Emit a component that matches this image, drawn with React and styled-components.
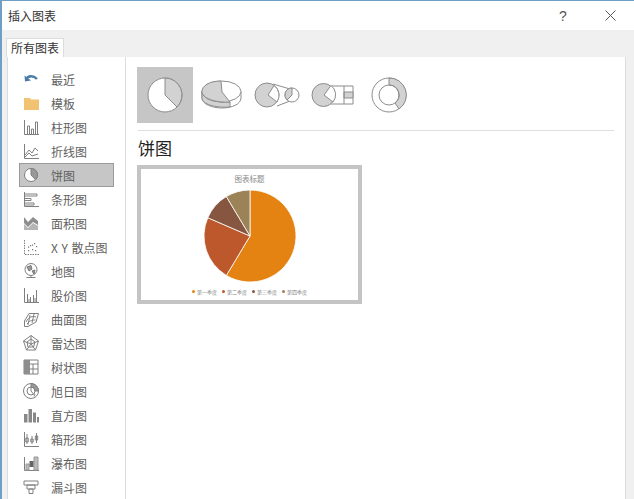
import React from 'react';
import styled, { createGlobalStyle } from 'styled-components';

const GlobalStyle = createGlobalStyle`
    html, body {
        margin: 0;
        padding: 0;
        background: #fff;
    }
    * {
        box-sizing: border-box;
    }
`;

const Window = styled.div`
    width: 634px;
    height: 499px;
    overflow: hidden;
    display: flex;
    flex-direction: column;
    background: #f0f0f0;
    border-top: 1px solid #6f9fc4;
    border-left: 2px solid #6f9fc4;
    font-family: 'Noto Sans CJK SC', 'Liberation Sans', sans-serif;
`;

const TitleBar = styled.div`
    height: 29px;
    flex: none;
    display: flex;
    align-items: center;
    padding: 0 18px 0 6px;
    background: #fff;
`;

const Title = styled.div`
    flex: 1;
    font-size: 12px;
    color: #333;
`;

const HelpButton = styled.div`
    width: 16px;
    margin-right: 34px;
    text-align: center;
    font-family: 'Liberation Sans', sans-serif;
    font-size: 14px;
    color: #555;
`;

const TabStrip = styled.div`
    height: 27px;
    flex: none;
    display: flex;
    align-items: flex-end;
    padding-left: 4px;
`;

const Tab = styled.div`
    width: 58px;
    height: 19px;
    text-align: center;
    background: #fff;
    border: 1px solid #dcdcdc;
    border-bottom: 0;
    font-size: 12px;
    line-height: 18px;
    color: #333;
`;

const Panel = styled.div`
    flex: 1;
    min-height: 0;
    display: flex;
    margin: 0 8px 0 5px;
    background: #fff;
    border-left: 1px solid #dcdcdc;
    border-right: 1px solid #dcdcdc;
`;

const Sidebar = styled.div`
    width: 118px;
    flex: none;
    padding: 10px 11px 0 11px;
    border-right: 1px solid #dcdcdc;
`;

const NavRow = styled.div`
    height: 24px;
    display: flex;
    align-items: center;
    gap: 11px;
    padding-left: 2px;
    font-size: 12px;
    color: #5f5f5f;
    background: ${props => (props.$active ? '#c6c6c6' : 'transparent')};
    border: 1px solid ${props => (props.$active ? '#9a9a9a' : 'transparent')};
`;

const NavIcon = styled.svg`
    width: 18px;
    height: 18px;
    flex: none;
    fill: none;
    stroke: #808080;
    stroke-width: 1;
`;

const NavText = styled.span`
    white-space: nowrap;
    word-spacing: 1px;
`;

const Content = styled.div`
    flex: 1;
    padding: 10px 11px 0 11px;
`;

const TypeRow = styled.div`
    display: flex;
    height: 56px;
`;

const TypeButton = styled.div`
    width: 56px;
    height: 56px;
    flex: none;
    display: flex;
    align-items: center;
    justify-content: center;
    background: ${props => (props.$active ? '#c6c6c6' : 'transparent')};
`;

const TypeIcon = styled.svg`
    width: 48px;
    height: 48px;
    fill: none;
    stroke: #8c8c8c;
    stroke-width: 1;
`;

const Divider = styled.div`
    height: 1px;
    margin: 7px 0 0 1px;
    background: #dedede;
`;

const Heading = styled.div`
    margin: 4px 0 4px 1px;
    font-size: 17px;
    line-height: 26px;
    color: #222;
`;

const Preview = styled.div`
    width: 225px;
    height: 139px;
    display: flex;
    flex-direction: column;
    align-items: center;
    padding-top: 4px;
    background: #fff;
    border: 4px solid #c4c4c4;
`;

const ChartTitle = styled.div`
    font-size: 7.5px;
    line-height: 11px;
    color: #8a8a8a;
`;

const Pie = styled.svg`
    width: 96px;
    height: 96px;
    margin-top: 4px;
    flex: none;
`;

const Legend = styled.div`
    display: flex;
    gap: 5px;
    margin-top: 4px;
`;

const LegendItem = styled.div`
    display: flex;
    align-items: center;
    gap: 2px;
    font-size: 5px;
    line-height: 7px;
    color: #888;
`;

const LegendDot = styled.i`
    width: 3px;
    height: 3px;
    border-radius: 50%;
    background: ${props => props.$color};
`;

const grey = '#d2d2d2';

const navItems = [
    {
        label: '最近',
        icon: (
            <>
                <path d="M4 9.5 C6 5.5 11 5 15 9" stroke="#4a7dab" strokeWidth="2.4" />
                <path d="M2.5 5.5 L3 11.5 L9 10.5 Z" fill="#4a7dab" stroke="none" />
            </>
        ),
    },
    {
        label: '模板',
        icon: <path d="M2 4 H8 L9 5.5 H17 V16 H2 Z" fill="#f0c272" stroke="none" />,
    },
    {
        label: '柱形图',
        icon: <path d="M2.5 2 V16.5 H17 M5.5 16 V8 H7.5 V16 M9.5 16 V11 H11.5 V16 M13.5 16 V4 H15.5 V16" />,
    },
    {
        label: '折线图',
        icon: <path d="M2.5 2 V16.5 H17 M3 13 L7 8 L10 11 L13 6 L16 9 M3 15 L7 11 L10 14 L16 12" />,
    },
    {
        label: '饼图',
        icon: (
            <>
                <circle cx="9" cy="9" r="6.5" fill="#fff" />
                <path d="M9 2.5 A6.5 6.5 0 0 1 13.5 13.7 L9 9 Z" fill="#999" />
            </>
        ),
    },
    {
        label: '条形图',
        icon: <path d="M2.5 2 V16.5 H17 M3 4 H15 V6 H3 M3 8.5 H9 V10.5 H3 M3 13 H12 V15 H3" />,
    },
    {
        label: '面积图',
        icon: (
            <>
                <path d="M2 3 L6 8 L11 3 L16 7 V11 L11 8 L6 13 L2 9 Z" fill="#8e8e8e" stroke="none" />
                <path d="M2 10 L6 14 L11 9 L16 12 V16 H2 Z" fill="#b5b5b5" stroke="none" />
            </>
        ),
    },
    {
        label: 'X Y 散点图',
        icon: (
            <>
                <path d="M2.5 2 V16.5 H17" strokeDasharray="1.5 1" />
                <path
                    d="M6 12 h1.2 v1.2 h-1.2 Z M8 7 h1.2 v1.2 h-1.2 Z M10 11 h1.2 v1.2 h-1.2 Z M12 5 h1.2 v1.2 h-1.2 Z M14 8 h1.2 v1.2 h-1.2 Z M6 8.5 h1.2 v1.2 h-1.2 Z M13 12 h1.2 v1.2 h-1.2 Z M10 6.5 h1.2 v1.2 h-1.2 Z"
                    fill="#777"
                    stroke="none"
                />
            </>
        ),
    },
    {
        label: '地图',
        icon: (
            <>
                <circle cx="9" cy="7.5" r="6" />
                <path d="M5 5 L9 3.5 L10 7 L7 9 Z M10 9 L13 8 L12 12 Z" fill="#999" stroke="#777" />
                <path d="M4.5 15.5 H13.5 M9 13.5 V15.5" />
            </>
        ),
    },
    {
        label: '股价图',
        icon: <path d="M2.5 2 V16.5 H17 M5.5 8 V16 M8.5 11 V16 M11.5 9 V16 M14.5 4 V16 M7 13 V16 M13 12 V16" />,
    },
    {
        label: '曲面图',
        icon: (
            <>
                <path d="M2.5 11 L7 3.5 H16.5 L14 12 L6 16.5 H2.5 Z" />
                <path d="M4 12 C7 6 11 6 14 7 M5 14 C8 10 11 10 13.5 10 M8 5 L6 15 M12 4 L10 13" />
            </>
        ),
    },
    {
        label: '雷达图',
        icon: <path d="M9 1.5 L16.5 7 L13.5 16 H4.5 L1.5 7 Z M9 1.5 V10 M1.5 7 L9 10 L16.5 7 M4.5 16 L9 10 L13.5 16 M9 5 L13 8 L11.5 13 L6 13 L5 8 Z" />,
    },
    {
        label: '树状图',
        icon: (
            <>
                <path d="M2 2 H16 V16 H2 Z" />
                <path d="M2 2 H8 V16 H2 Z" fill="#8e8e8e" stroke="none" />
                <path d="M8 6 H16 M11 6 V16 M8 11 H16" />
            </>
        ),
    },
    {
        label: '旭日图',
        icon: (
            <>
                <circle cx="9" cy="9" r="7.5" />
                <path d="M9 1.5 A7.5 7.5 0 0 1 16.5 9 H13 A4 4 0 0 0 9 5 Z" fill="#999" />
                <circle cx="9" cy="9" r="4" />
                <path d="M9 9 L11.5 12 M9 9 V5 M12 14.5 L13 12" />
            </>
        ),
    },
    {
        label: '直方图',
        icon: <path d="M2 16.5 V8 H5.5 V16.5 Z M6.5 16.5 V3 H10 V16.5 Z M11 16.5 V6.5 H14 V16.5 Z M15 16.5 V11 H17 V16.5 Z" fill="#888" stroke="none" />,
    },
    {
        label: '箱形图',
        icon: (
            <path d="M2.5 2 V16.5 H17 M5 4 V14 M3.8 8 H6.2 V12 H3.8 Z M10 6 V14 M8.8 9 H11.2 V12 H8.8 Z M14.5 3 V13 M13.3 6 H15.7 V10 H13.3 Z" />
        ),
    },
    {
        label: '瀑布图',
        icon: (
            <>
                <path d="M2.5 3 V16.5 H17" />
                <path d="M4 10 H7 V16 H4 Z M12 3 H16 V16 H12 Z" fill="#bbb" stroke="#999" />
                <path d="M7.5 7 H11.5 V13 H7.5 Z" fill="#666" stroke="none" />
            </>
        ),
    },
    {
        label: '漏斗图',
        icon: <path d="M2 3 H16 V7 H2 Z M5 7 H13 V11 H5 Z M7 11 H11 V15.5 H7 Z" />,
    },
];

const typeIcons = [
    <>
        <circle cx="24" cy="24" r="17" fill="#fff" />
        <path d="M24 7 A17 17 0 0 1 36 36 L24 24 Z" fill={grey} />
    </>,
    <>
        <path d="M5 20.5 V27 C5 33 15 37 25 37 C35 37 44 33 44 27 V20.5" fill="#fff" />
        <path d="M5 20.5 V27 C5 33 18 37 33 36 V31 C18 32 5 27 5 20.5 Z" fill={grey} />
        <ellipse cx="24.5" cy="20.5" rx="19.5" ry="10.5" fill="#fff" />
        <path d="M24 10 C12 10 5 15 5 20.5 C5 27 18 32 33 31 L25 21 Z" fill={grey} />
    </>,
    <>
        <path d="M20 13 L37 18 M24 35 L37 30" />
        <circle cx="14" cy="24" r="12" fill={grey} />
        <path d="M15 24 L21 14.5 A12 12 0 0 1 24 31 Z" fill="#fff" />
        <circle cx="39" cy="24" r="7" fill="#fff" />
        <path d="M39 24 V17 A7 7 0 0 0 34 29 Z" fill={grey} />
    </>,
    <>
        <path d="M22 15 H44 V33 H22" />
        <path d="M35 21 H44 V27 H35 Z" fill={grey} />
        <path d="M35 15 V33" />
        <circle cx="14.5" cy="24" r="11.5" fill={grey} />
        <path d="M15 24 L22 14.5 A11.5 11.5 0 0 1 24 31 Z" fill="#fff" />
    </>,
    <>
        <circle cx="24" cy="24" r="17" fill="#fff" />
        <path d="M24 7 A17 17 0 0 1 34 38 L30 32 A10 10 0 0 0 24 14 Z" fill={grey} />
        <circle cx="24" cy="24" r="10" />
    </>,
];

const pieSlices = [
    { color: '#e48312', to: 0.586 },
    { color: '#bd582c', to: 0.815 },
    { color: '#865640', to: 0.914 },
    { color: '#9b8357', to: 1 },
];

const legendItems = [
    { label: '第一季度', color: '#e48312' },
    { label: '第二季度', color: '#bd582c' },
    { label: '第三季度', color: '#865640' },
    { label: '第四季度', color: '#9b8357' },
];

const polar = turn => {
    const angle = turn * 2 * Math.PI;
    return `${48 + 46 * Math.sin(angle)} ${48 - 46 * Math.cos(angle)}`;
};

const App = () => (
    <>
        <GlobalStyle />
        <Window>
            <TitleBar>
                <Title>插入图表</Title>
                <HelpButton>?</HelpButton>
                <svg width="11" height="11" viewBox="0 0 11 11" stroke="#555" strokeWidth="1">
                    <path d="M.5 .5 L10.5 10.5 M10.5 .5 L.5 10.5" />
                </svg>
            </TitleBar>
            <TabStrip>
                <Tab>所有图表</Tab>
            </TabStrip>
            <Panel>
                <Sidebar>
                    {navItems.map(item => (
                        <NavRow key={item.label} $active={item.label === '饼图'}>
                            <NavIcon viewBox="0 0 18 18">{item.icon}</NavIcon>
                            <NavText>{item.label}</NavText>
                        </NavRow>
                    ))}
                </Sidebar>
                <Content>
                    <TypeRow>
                        {typeIcons.map((icon, index) => (
                            <TypeButton key={index} $active={index === 0}>
                                <TypeIcon viewBox="0 0 48 48">{icon}</TypeIcon>
                            </TypeButton>
                        ))}
                    </TypeRow>
                    <Divider />
                    <Heading>饼图</Heading>
                    <Preview>
                        <ChartTitle>图表标题</ChartTitle>
                        <Pie viewBox="0 0 96 96">
                            {pieSlices.map((slice, index) => (
                                <path
                                    key={slice.color}
                                    d={`M48 48 L${polar(index ? pieSlices[index - 1].to : 0)} A46 46 0 ${
                                        slice.to - (index ? pieSlices[index - 1].to : 0) > 0.5 ? 1 : 0
                                    } 1 ${polar(slice.to)} Z`}
                                    fill={slice.color}
                                    stroke="#fff"
                                    strokeWidth="0.8"
                                />
                            ))}
                        </Pie>
                        <Legend>
                            {legendItems.map(item => (
                                <LegendItem key={item.label}>
                                    <LegendDot $color={item.color} />
                                    {item.label}
                                </LegendItem>
                            ))}
                        </Legend>
                    </Preview>
                </Content>
            </Panel>
        </Window>
    </>
);

export default App;
